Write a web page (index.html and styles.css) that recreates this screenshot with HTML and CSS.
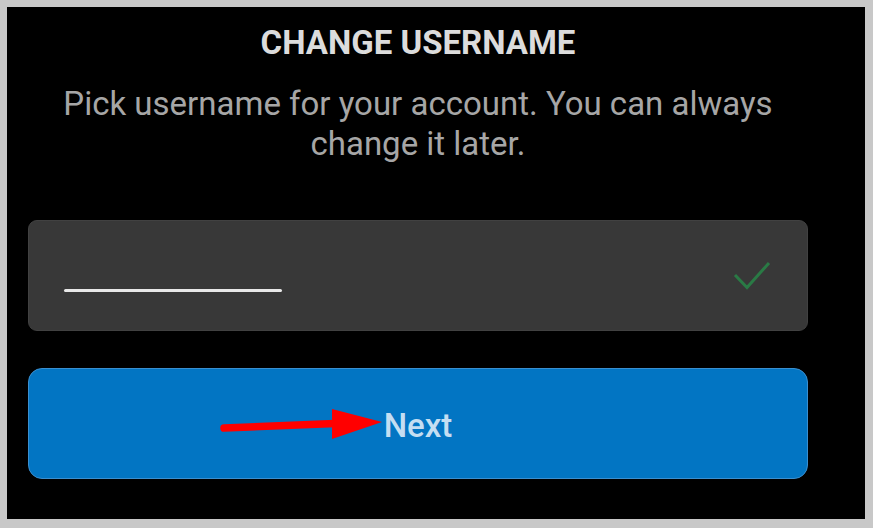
FILE: index.html
```html
<!DOCTYPE html>
<html>
<head>
<meta charset="utf-8">
<link rel="stylesheet" href="styles.css">
</head>
<body>
<div class="frame">
  <div class="column">
    <h1 class="title">CHANGE USERNAME</h1>
    <p class="subtitle">Pick username for your account. You can always<br>change it later.</p>
    <div class="field">
      <span class="redact"></span>
      <svg class="check" width="40" height="32" viewBox="0 0 40 32"><path d="M2 15 L14 27.5 L36 3" fill="none" stroke="#2a7a45" stroke-width="3"/></svg>
    </div>
    <div class="button">
      <span class="label">Next</span>
      <svg class="arrow" width="170" height="40" viewBox="0 0 170 40"><path d="M7 23 L118 18.5" stroke="#ff0000" stroke-width="7.5" stroke-linecap="round"/><polygon points="115,4 165,17 115,34" fill="#ff0000"/></svg>
    </div>
  </div>
</div>
</body>
</html>
```
FILE: styles.css
```css
html, body { margin: 0; padding: 0; }
body { background: #c8c8c8; width: 873px; height: 528px; overflow: hidden; }
.frame {
  margin: 7px 8px 0 7px;
  height: 512px;
  background: #000;
  box-sizing: border-box;
  padding: 17px 0 0 21px;
}
.column { width: 780px; display: flex; flex-direction: column; align-items: center; }
.title {
  margin: 0;
  font-family: Roboto, "Liberation Sans", sans-serif;
  font-weight: 700;
  font-size: 33px;
  line-height: 38px;
  color: #dcdcdc;
}
.subtitle {
  margin: 22px 0 0;
  width: 780px;
  text-align: center;
  font-family: Roboto, "Liberation Sans", sans-serif;
  font-weight: 400;
  font-size: 33px;
  line-height: 40px;
  color: #a6a6a6;
}
.field {
  margin-top: 56px;
  width: 780px;
  height: 111px;
  box-sizing: border-box;
  background: #383838;
  border: 1px solid #414141;
  border-radius: 9px;
  position: relative;
}
.redact {
  position: absolute;
  left: 35px; top: 68px;
  width: 218px; height: 3px;
  background: #e8e8e8;
  border-radius: 2px;
}
.check { position: absolute; left: 704px; top: 39px; }
.button {
  width: 780px;
  height: 111px;
  margin-top: 37px;
  box-sizing: border-box;
  background: #0275c3;
  border: 1px solid #3a8fd0;
  border-radius: 14px;
  display: flex;
  align-items: center;
  justify-content: center;
  position: relative;
}
.label {
  font-family: Roboto, "Liberation Sans", sans-serif;
  font-weight: 500;
  font-size: 33px;
  color: #c4def2;
  margin-top: 4px;
}
.arrow { position: absolute; left: 188px; top: 36px; }
```
